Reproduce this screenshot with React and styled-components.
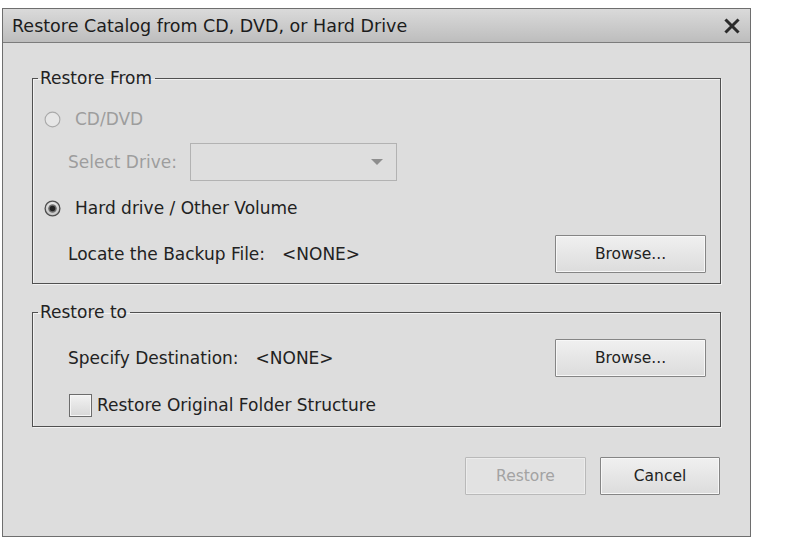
import React from 'react';
import styled, { createGlobalStyle } from 'styled-components';

const GlobalStyle = createGlobalStyle`
    html, body {
        margin: 0;
        padding: 0;
        background: #ffffff;
    }
    body {
        font-family: "DejaVu Sans", "Liberation Sans", sans-serif;
    }
`;

function CloseIcon() {
    return (
        <svg width="16" height="16" viewBox="0 0 16 16">
            <path d="M2.5 2.5 L13.5 13.5 M13.5 2.5 L2.5 13.5" stroke="#2b2b2b" strokeWidth="3" strokeLinecap="square" />
        </svg>
    );
}

function RadioIcon({ checked, disabled }) {
    if (disabled) {
        return (
            <svg width="17" height="17" viewBox="0 0 17 17">
                <circle cx="8.5" cy="8.5" r="7.4" fill="#e6e6e6" stroke="#a9a9a9" strokeWidth="1.1" />
            </svg>
        );
    }
    return (
        <svg width="17" height="17" viewBox="0 0 17 17">
            <defs>
                <radialGradient id="rfill" cx="50%" cy="35%" r="65%">
                    <stop offset="0%" stopColor="#f6f6f6" />
                    <stop offset="100%" stopColor="#bdbdbd" />
                </radialGradient>
            </defs>
            <circle cx="8.5" cy="8.5" r="7.4" fill="url(#rfill)" stroke="#4e4e4e" strokeWidth="1.3" />
            {checked && <circle cx="8.5" cy="8.5" r="4.3" fill="#707070" />}
            {checked && <circle cx="8.5" cy="8.5" r="2.8" fill="#232323" />}
        </svg>
    );
}

function DropArrow() {
    return (
        <svg width="14" height="8" viewBox="0 0 14 8">
            <path d="M1 1 L13 1 L7 7 Z" fill="#8e8e8e" />
        </svg>
    );
}

function App() {
    return (
        <>
            <GlobalStyle />
            <Page>
                <Dialog>
                    <TitleBar>
                        <Title>Restore Catalog from CD, DVD, or Hard Drive</Title>
                        <CloseButton><CloseIcon /></CloseButton>
                    </TitleBar>
                    <Body>
                        <Group>
                            <Legend>Restore From</Legend>
                            <GroupContent $pt={17} $pb={10}>
                                <Row $h={28}>
                                    <RadioIcon disabled />
                                    <RadioLabel $disabled>CD/DVD</RadioLabel>
                                </Row>
                                <Row $h={38} $mt={10}>
                                    <FieldLabel $disabled $w={122}>Select Drive:</FieldLabel>
                                    <Select>
                                        <DropArrow />
                                    </Select>
                                </Row>
                                <Row $h={28} $mt={13}>
                                    <RadioIcon checked />
                                    <RadioLabel>Hard drive / Other Volume</RadioLabel>
                                </Row>
                                <Row $h={38} $mt={13}>
                                    <FieldLabel>Locate the Backup File:</FieldLabel>
                                    <Value>&lt;NONE&gt;</Value>
                                    <Spacer />
                                    <Button>Browse...</Button>
                                </Row>
                            </GroupContent>
                        </Group>
                        <Group $mt={18}>
                            <Legend>Restore to</Legend>
                            <GroupContent $pt={17} $pb={9}>
                                <Row $h={38}>
                                    <FieldLabel>Specify Destination:</FieldLabel>
                                    <Value>&lt;NONE&gt;</Value>
                                    <Spacer />
                                    <Button>Browse...</Button>
                                </Row>
                                <Row $h={24} $mt={16}>
                                    <CheckBox />
                                    <CheckLabel>Restore Original Folder Structure</CheckLabel>
                                </Row>
                            </GroupContent>
                        </Group>
                        <Footer>
                            <Button $w={121} disabled>Restore</Button>
                            <Button $w={120}>Cancel</Button>
                        </Footer>
                    </Body>
                </Dialog>
            </Page>
        </>
    );
}

/* ----------------- Styles ----------------- */
const Page = styled.div`
    padding: 8px 0 0 2px;
`;

const Dialog = styled.div`
    box-sizing: border-box;
    width: 749px;
    height: 529px;
    border: 1px solid #6e6e6e;
    background: #dddddd;
    display: flex;
    flex-direction: column;
`;

const TitleBar = styled.div`
    height: 33px;
    display: flex;
    align-items: center;
    justify-content: space-between;
    padding: 0 9px 0 9px;
    background: linear-gradient(to bottom, #dadada, #bdbdbd);
    border-bottom: 1px solid #7c7c7c;
    flex-shrink: 0;
`;

const Title = styled.div`
    font-size: 17.5px;
    color: #1c1c1c;
    white-space: nowrap;
`;

const CloseButton = styled.div`
    display: flex;
    align-items: center;
    padding-right: 1px;
`;

const Body = styled.div`
    padding: 25px 29px 0 29px;
    display: flex;
    flex-direction: column;
`;

const Group = styled.fieldset`
    margin: ${p => p.$mt || 0}px 0 0 0;
    padding: 0;
    border: 1px solid #505050;
    box-shadow: inset 1px 1px 0 #f2f2f2, 1px 1px 0 #f2f2f2;
    min-width: 0;
`;

const Legend = styled.legend`
    margin-left: 5px;
    padding: 0 3px 0 2px;
    font-size: 17px;
    line-height: 20px;
    color: #222;
`;

const GroupContent = styled.div`
    padding: ${p => p.$pt}px 14px ${p => p.$pb}px 11px;
    display: flex;
    flex-direction: column;
`;

const Row = styled.div`
    height: ${p => p.$h}px;
    margin-top: ${p => p.$mt || 0}px;
    display: flex;
    align-items: center;
    font-size: 17px;
    color: #222;
`;

const RadioLabel = styled.span`
    margin-left: 14px;
    color: ${p => (p.$disabled ? '#9d9d9d' : '#222')};
    white-space: nowrap;
`;

const FieldLabel = styled.span`
    margin-left: 24px;
    width: ${p => (p.$w ? `${p.$w}px` : 'auto')};
    color: ${p => (p.$disabled ? '#9d9d9d' : '#222')};
    white-space: nowrap;
`;

const Value = styled.span`
    margin-left: 17px;
    white-space: nowrap;
`;

const Spacer = styled.div`
    flex: 1;
`;

const Select = styled.div`
    box-sizing: border-box;
    width: 207px;
    height: 38px;
    border: 1px solid #b2b2b2;
    background: #dedede;
    display: flex;
    align-items: center;
    justify-content: flex-end;
    padding-right: 12px;
`;

const Button = styled.button`
    box-sizing: border-box;
    width: ${p => p.$w || 151}px;
    height: 38px;
    border: 1px solid ${p => (p.disabled ? '#b9b9b9' : '#858585')};
    border-radius: 1px;
    background: ${p => (p.disabled ? '#e2e2e2' : 'linear-gradient(to bottom, #f0f0f0, #dcdcdc)')};
    font-family: "DejaVu Sans", "Liberation Sans", sans-serif;
    font-size: 15.5px;
    color: ${p => (p.disabled ? '#a3a3a3' : '#222')};
    padding: 0;
    box-shadow: inset 0 0 0 1px ${p => (p.disabled ? '#ececec' : '#f7f7f7')};
`;

const CheckBox = styled.div`
    box-sizing: border-box;
    width: 23px;
    height: 23px;
    margin-left: 25px;
    border: 1px solid #6c6c6c;
    background: linear-gradient(to bottom, #f2f2f2, #d8d8d8);
    box-shadow: inset 0 0 0 1px #f6f6f6;
`;

const CheckLabel = styled.span`
    margin-left: 5px;
    white-space: nowrap;
`;

const Footer = styled.div`
    margin-top: 30px;
    display: flex;
    justify-content: flex-end;
    gap: 14px;
    padding-right: 1px;
`;

export default App;
